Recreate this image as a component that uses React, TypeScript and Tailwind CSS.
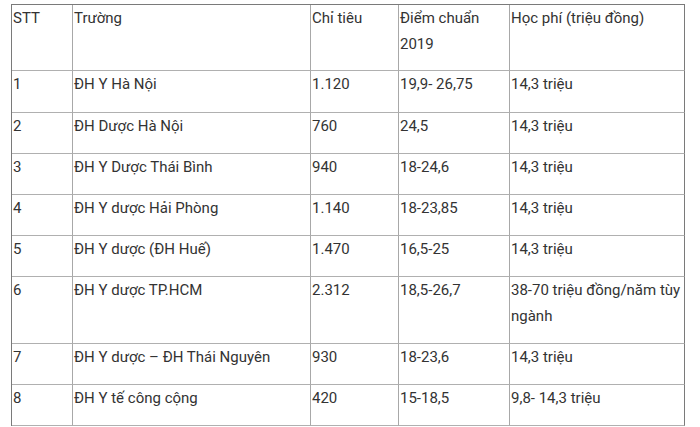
import React from "react";

const rows: { cells: string[][]; h: number }[] = [
  { cells: [["STT"], ["Trường"], ["Chỉ tiêu"], ["Điểm chuẩn", "2019"], ["Học phí (triệu đồng)"]], h: 66 },
  { cells: [["1"], ["ĐH Y Hà Nội"], ["1.120"], ["19,9- 26,75"], ["14,3 triệu"]], h: 42 },
  { cells: [["2"], ["ĐH Dược Hà Nội"], ["760"], ["24,5"], ["14,3 triệu"]], h: 41 },
  { cells: [["3"], ["ĐH Y Dược Thái Bình"], ["940"], ["18-24,6"], ["14,3 triệu"]], h: 41 },
  { cells: [["4"], ["ĐH Y dược Hải Phòng"], ["1.140"], ["18-23,85"], ["14,3 triệu"]], h: 41 },
  { cells: [["5"], ["ĐH Y dược (ĐH Huế)"], ["1.470"], ["16,5-25"], ["14,3 triệu"]], h: 41 },
  { cells: [["6"], ["ĐH Y dược TP.HCM"], ["2.312"], ["18,5-26,7"], ["38-70 triệu đồng/năm tùy", "ngành"]], h: 67 },
  { cells: [["7"], ["ĐH Y dược – ĐH Thái Nguyên"], ["930"], ["18-23,6"], ["14,3 triệu"]], h: 41 },
  { cells: [["8"], ["ĐH Y tế công cộng"], ["420"], ["15-18,5"], ["9,8- 14,3 triệu"]], h: 41 },
];

export default function App() {
  return (
    <div
      className="w-[700px] h-[427px] bg-white overflow-hidden pt-[4px] pl-[11px]"
      style={{ fontFamily: "Roboto, 'Liberation Sans', sans-serif" }}
    >
      <div className="grid grid-cols-[61px_238px_88px_111px_175px] w-max border-l border-t border-[#7a7a7a] text-[15px] leading-[26px] text-[#333333]">
        {rows.map((r, ri) =>
          r.cells.map((c, ci) => (
            <div
              key={`${ri}-${ci}`}
              className={
                "border-b border-r border-b-[#b0b0b0] pl-[1px] pr-1 " +
                (ci === 4 ? "border-r-[#7a7a7a]" : "border-r-[#a8a8a8]")
              }
              style={{ height: r.h }}
            >
              {c.map((line, li) => (
                <div key={li} className="whitespace-nowrap">
                  {line}
                </div>
              ))}
            </div>
          ))
        )}
      </div>
    </div>
  );
}
